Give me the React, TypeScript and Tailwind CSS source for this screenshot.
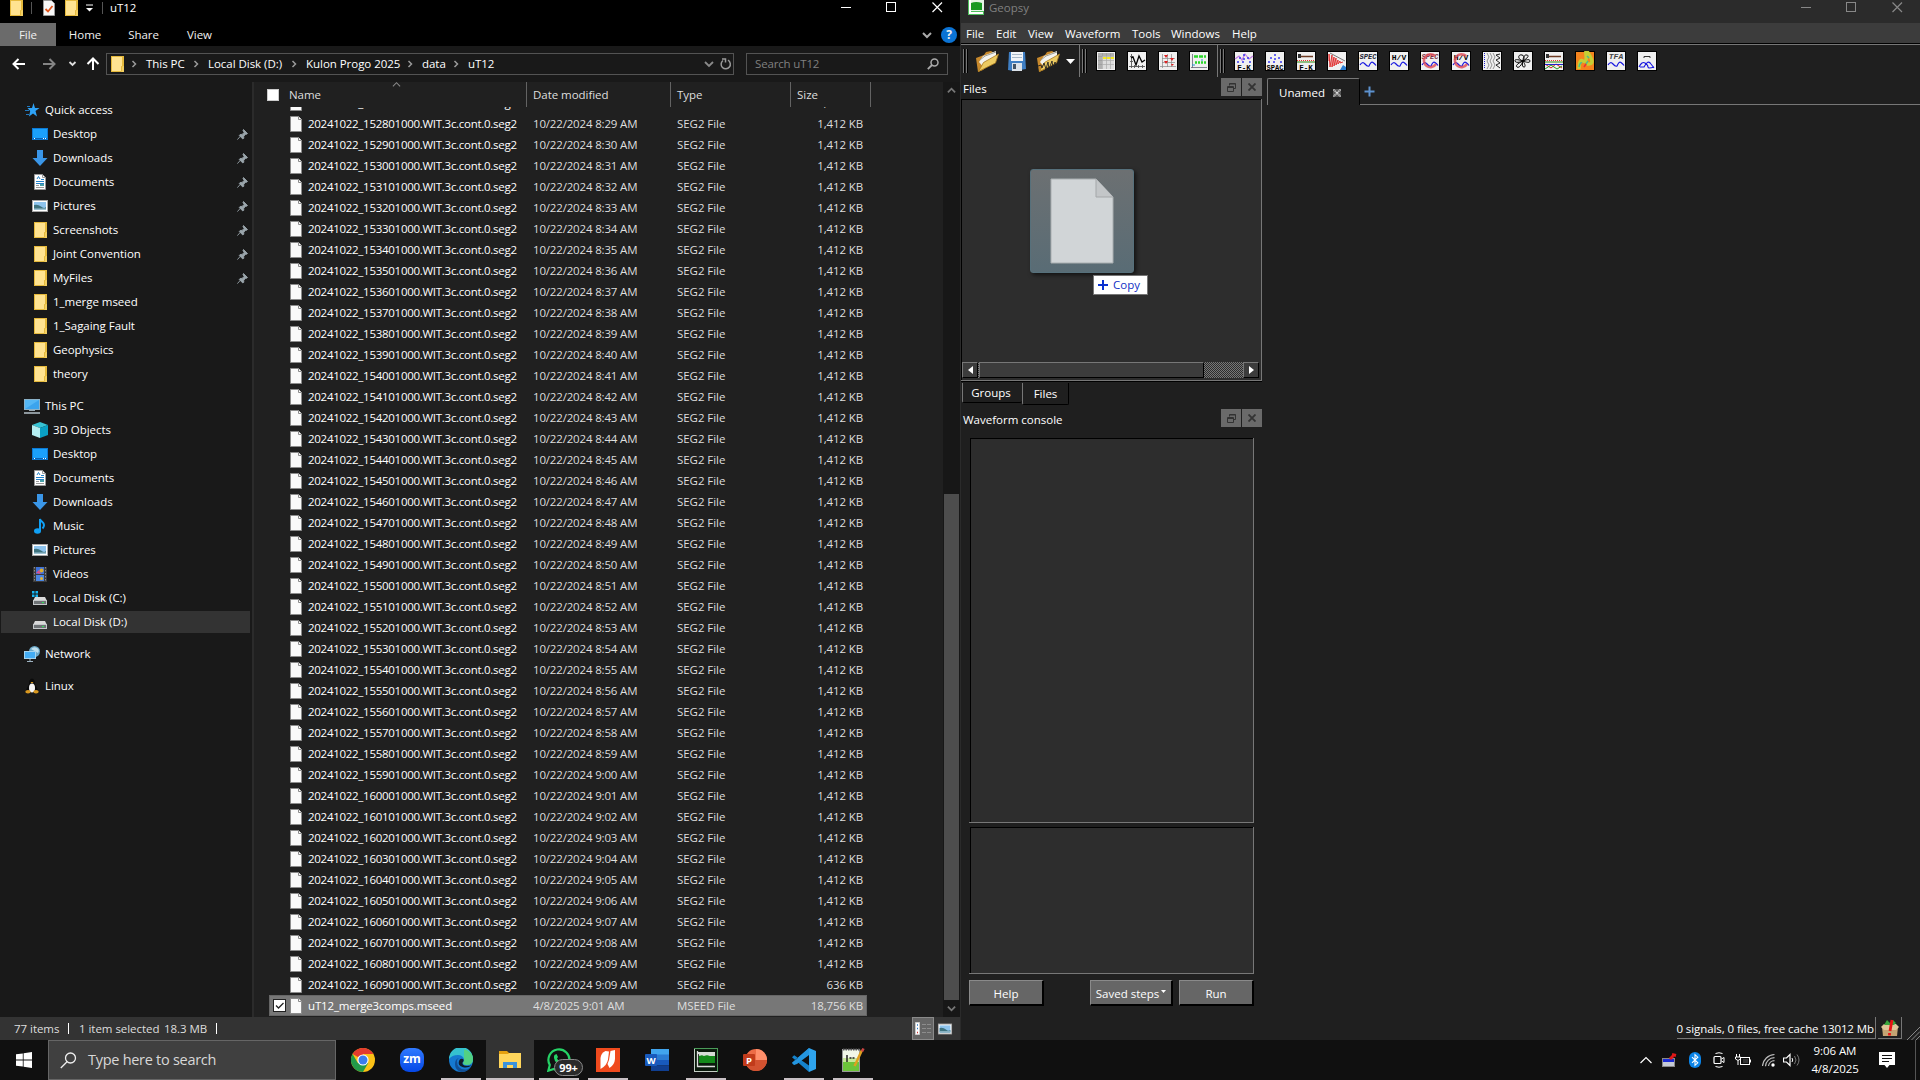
import React from "react";

type P = { children?: React.ReactNode; className?: string };

const Svg = ({ w = 16, h = 16, vb, className = "", children }: P & { w?: number; h?: number; vb?: string }) => (
  <svg width={w} height={h} viewBox={vb ?? `0 0 ${w} ${h}`} fill="none" className={`block shrink-0 ${className}`}>
    {children}
  </svg>
);

const Folder = () => (
  <Svg>
    <rect x="2" y="0" width="13" height="16" fill="#e5b93c" />
    <rect x="3" y="1" width="10" height="14" fill="#ffe391" />
    <rect x="12" y="10" width="3" height="6" fill="#f3cf62" />
    <path d="M12.500 15.500v-5h1" stroke="#e5b93c" />
  </Svg>
);

const FileIcon = () => (
  <Svg w={12} h={16}>
    <path d="M.5.5h8l3 3v12H.5z" fill="#fafafa" stroke="#8c8c8c" />
    <path d="M8.500.5v3h3" stroke="#8c8c8c" fill="#fff" />
  </Svg>
);

const DocIcon = () => (
  <Svg>
    <path d="M2.500.5h8l3 3v12h-11z" fill="#fff" stroke="#999" />
    <path d="M10.500.5v3h3" stroke="#999" />
    <path d="M5 5l1.500-2.500L8 5M9 5.500h3M4 7.500h8M4 9.500h8" stroke="#2582c8" />
    <path d="M4 11.500h3M4 13.500h8" stroke="#999" />
    <rect x="8" y="10" width="4" height="2" fill="#4aa1a9" />
  </Svg>
);

const DesktopIcon = () => (
  <Svg>
    <rect x=".5" y="2.500" width="15" height="11" fill="#1ba1fb" stroke="#0d7ad4" />
    <path d="M1 12.500h14" stroke="#0b62b4" />
    <path d="M2 12.500h1M11 12.500h1M13 12.500h1" stroke="#fff" />
  </Svg>
);

const DownIcon = () => (
  <Svg>
    <path d="M5 0h6v8h4.500L8 16 .5 8H5z" fill="#3a96e8" />
  </Svg>
);

const PicIcon = () => (
  <Svg>
    <rect x=".5" y="2.500" width="15" height="11" fill="#fff" stroke="#a8a8a8" />
    <rect x="2" y="4" width="12" height="8" fill="#8ec4ee" />
    <path d="M2 7q4-1 7 1.500t5 .5v3H2z" fill="#3f7480" />
    <path d="M2 10.500h12v1.500H2z" fill="#9fc4d4" />
  </Svg>
);

const StarIcon = () => (
  <Svg>
    <path d="M9.500 1l1.500 5h4.500l-4 3 1.500 5.500L9 11.500 5 14.500 6.200 9 3.500 6H8z" fill="#2ea3f7" />
    <path d="M3 4.500h3M1 8.500h4M2 12.500h3" stroke="#2179be" />
  </Svg>
);

const PcIcon = () => (
  <Svg>
    <rect x=".5" y="1.500" width="15" height="10" fill="#55b7f5" stroke="#8bb2c9" />
    <path d="M1 11L15 2v9z" fill="#3ba4ee" />
    <rect x="5" y="12" width="6" height="1" fill="#9aa9b3" />
    <path d="M0 15h16" stroke="#b5c2ca" strokeWidth="1.500" />
  </Svg>
);

const CubeIcon = () => (
  <Svg>
    <path d="M8 0l8 3-8 3-8-3z" fill="#37c3d4" />
    <path d="M0 3l8 3v10l-8-3z" fill="#b5eef1" />
    <path d="M16 3L8 6v10l8-3z" fill="#0aa0c4" />
  </Svg>
);

const MusicIcon = () => (
  <Svg>
    <ellipse cx="5.500" cy="13" rx="3.500" ry="2.800" fill="#10a0f5" />
    <path d="M8 13V1c1 3 4 3 4 6 0 1.500-.5 2.500-1.500 3.500" stroke="#10a0f5" strokeWidth="2" />
  </Svg>
);

const VideoIcon = () => (
  <Svg>
    <rect x="1" y="1" width="14" height="15" fill="#3b3b3b" />
    <path d="M2.500 1v15M13.500 1v15" stroke="#8a8a8a" strokeDasharray="1.500 1.500" />
    <rect x="4" y="1" width="8" height="7" fill="#3e72d8" />
    <rect x="4" y="9" width="8" height="6" fill="#4a86e2" />
    <circle cx="9.500" cy="4.500" r="2" fill="#dcae2d" />
    <path d="M4 7l3-3 2 4z" fill="#d84f8e" />
    <circle cx="9.500" cy="12.500" r="1.500" fill="#e6b432" />
  </Svg>
);

const DriveIcon = ({ win = false }: { win?: boolean }) => (
  <Svg>
    <path d="M3 7h10l2 4H1z" fill="#d9d9d9" />
    <rect x="1.500" y="10.500" width="13" height="4" fill="#6f7376" stroke="#c5c8ca" />
    <rect x="10" y="12" width="2" height="1" fill="#34e05a" />
    {win && <path d="M0 1h2.500v2.500H0zM3.500 1H6v2.500H3.500zM0 4.500h2.500V7H0zM3.500 4.500H6V7H3.500z" fill="#18b4f0" />}
  </Svg>
);

const NetIcon = () => (
  <Svg>
    <circle cx="10.500" cy="5.500" r="5.500" fill="#6ba8c8" />
    <path d="M7 3q3-3 6-1t1 5" fill="#bfe0ee" />
    <rect x=".5" y="5.500" width="11" height="7" fill="#44adf4" stroke="#a5d4ee" />
    <path d="M3 15.500h6M6 13v2" stroke="#9fb4c2" />
  </Svg>
);

const TuxIcon = () => (
  <Svg>
    <path d="M5.500 2.500Q8-1.500 10.500 2.500L11 6l3 6-2 3H4l-2-3 3-6z" fill="#0a0a0a" />
    <ellipse cx="8" cy="10" rx="3" ry="4.500" fill="#f6f6f6" />
    <path d="M6.500 4h3L8 5.500z" fill="#eaa722" />
    <ellipse cx="4" cy="13.800" rx="2.700" ry="1.700" fill="#d9981f" />
    <ellipse cx="12" cy="13.800" rx="2.700" ry="1.700" fill="#d9981f" />
  </Svg>
);

const Pin = () => (
  <Svg w={11} h={11}>
    <path d="M6.500.5l4 4-1 .8-.8-.1-2 2 .1 2-1 .8L2.300 6.500l.8-1 2-.1 2-2L6 1.500zM3.800 6.800L.4 10.600" fill="#9aa5ab" stroke="#9aa5ab" strokeWidth=".9" />
  </Svg>
);

const Chev = ({ d = "right", c = "#9a9a9a", s = 10, sw = 1.5 }: { d?: "right" | "down" | "up"; c?: string; s?: number; sw?: number }) => (
  <Svg w={s} h={s} vb="0 0 10 10">
    <path d={d === "right" ? "M3.500 2l3 3-3 3" : d === "down" ? "M1 3l4 4 4-4" : "M1 7l4-4 4 4"} stroke={c} strokeWidth={sw} />
  </Svg>
);

const WinButtons = ({ c }: { c: string }) => (
  <div className="ml-auto flex h-[15px] gap-[35px] pr-[17px]">
    <Svg w={10} h={15}><path d="M0 7.500h10" stroke={c} /></Svg>
    <Svg w={11} h={15}><rect x=".5" y="2.500" width="9" height="9" stroke={c} /></Svg>
    <Svg w={11} h={15}><path d="M.5 2.500l9.500 9.500M10 2.500L.5 12" stroke={c} strokeWidth="1.200" /></Svg>
  </div>
);

const crumbs: [string, string][] = [
  ["This PC", "w-[38px]"],
  ["Local Disk (D:)", "w-[74px]"],
  ["Kulon Progo 2025", "w-[92px]"],
  ["data", "w-[22px]"],
  ["uT12", "w-[30px]"],
];

const quick: [string, React.ReactNode, boolean][] = [
  ["Desktop", <DesktopIcon />, true],
  ["Downloads", <DownIcon />, true],
  ["Documents", <DocIcon />, true],
  ["Pictures", <PicIcon />, true],
  ["Screenshots", <Folder />, true],
  ["Joint Convention", <Folder />, true],
  ["MyFiles", <Folder />, true],
  ["1_merge mseed", <Folder />, false],
  ["1_Sagaing Fault", <Folder />, false],
  ["Geophysics", <Folder />, false],
  ["theory", <Folder />, false],
];

const pc: [string, React.ReactNode][] = [
  ["3D Objects", <CubeIcon />],
  ["Desktop", <DesktopIcon />],
  ["Documents", <DocIcon />],
  ["Downloads", <DownIcon />],
  ["Music", <MusicIcon />],
  ["Pictures", <PicIcon />],
  ["Videos", <VideoIcon />],
  ["Local Disk (C:)", <DriveIcon win />],
  ["Local Disk (D:)", <DriveIcon />],
];

const Root = ({ label, icon, className = "" }: { label: string; icon: React.ReactNode; className?: string }) => (
  <div className={`flex h-6 items-center gap-[5px] pl-6 ${className}`}>
    {icon}
    <span>{label}</span>
  </div>
);

const Item = ({ label, icon, pin, on }: { label: string; icon: React.ReactNode; pin?: boolean; on?: boolean }) => (
  <div className="flex h-6 items-start pl-px">
    <div className={`flex h-[22px] w-[249px] translate-y-px items-center gap-[5px] pl-[31px] pr-[2px] ${on ? "bg-[#333]" : ""}`}>
      {icon}
      <span className="flex-1">{label}</span>
      {pin && <Pin />}
    </div>
  </div>
);

const p2 = (n: number) => String(n).padStart(2, "0");
const rows = Array.from({ length: 43 }, (_, i) => {
  const t = 15 * 60 + 27 + i;
  const m = Math.min(t + 1, 16 * 60 + 9);
  return {
    name: `20241022_${p2(Math.floor(t / 60))}${p2(t % 60)}01000.WIT.3c.cont.0.seg2`,
    date: `10/22/2024 ${Math.floor(m / 60) - 7}:${p2(m % 60)} AM`,
    size: i === 42 ? "636 KB" : "1,412 KB",
  };
});

const Row = ({ name, date, type, size, on }: { name: string; date: string; type: string; size: string; on?: boolean }) => (
  <div
    className={`ml-[15px] grid h-[21px] w-[598px] shrink-0 grid-cols-[21px_18px_225px_144px_96px_1fr] items-center whitespace-nowrap pr-1 text-[#dedede] ${
      on ? "bg-[#777] outline -outline-offset-1 outline-[#666]" : ""
    }`}
  >
    <div className="pl-1">
      {on && (
        <Svg w={13} h={13}>
          <rect x=".5" y=".5" width="12" height="12" fill="#fff" stroke="#222" />
          <path d="M3 6.500L5.500 9 10.500 4" stroke="#222" strokeWidth="1.300" />
        </Svg>
      )}
    </div>
    <FileIcon />
    <span className={`text-white ${on ? "tracking-[-0.15px]" : "tracking-[-0.28px]"}`}>{name}</span>
    <span className="tracking-[-0.17px]">{date}</span>
    <span className="tracking-[-0.06px]">{type}</span>
    <span className="text-right tracking-[-0.12px]">{size}</span>
  </div>
);

const Explorer = () => (
  <section className="flex h-full w-[960px] flex-col bg-[#191919] tracking-[-0.04px] text-white">
    <div className="flex h-[23px] bg-black">
      <div className="flex h-4 items-center pl-2">
        <Folder />
        <div className="ml-[7px] h-3 w-px bg-[#555]" />
        <Svg className="ml-[8px]">
          <path d="M3.500.5h8l3 3v12h-11z" fill="#f7f7f7" stroke="#999" />
          <path d="M5.500 9l2.500 2.500L12.500 6" stroke="#e2551c" strokeWidth="1.800" />
        </Svg>
        <div className="ml-[7px]"><Folder /></div>
        <Svg w={7} h={8} className="ml-[7px]">
          <path d="M0 1h7" stroke="#fff" />
          <path d="M0 4h7L3.500 7.500z" fill="#fff" />
        </Svg>
        <div className="ml-[9px] h-3 w-px bg-[#555]" />
        <span className="ml-[7px]">uT12</span>
      </div>
      <WinButtons c="#fff" />
    </div>
    <div className="flex h-[23px] items-center bg-black text-[#f0f0f0]">
      <div className="flex h-full w-14 items-center justify-center bg-[#6b6b6b] pt-px">File</div>
      <span className="w-[58px] pt-px text-center">Home</span>
      <span className="w-[59px] pt-px text-center">Share</span>
      <span className="w-[53px] pt-px text-center">View</span>
      <div className="ml-auto flex items-center gap-[9px] pr-[3px]">
        <Chev d="down" c="#aaa" sw={2} />
        <div className="flex h-4 w-4 items-center justify-center rounded-full bg-[#0b73d4] text-[12px] font-bold">?</div>
      </div>
    </div>
    <div className="flex h-9 items-center">
      <Svg w={106} h={24}>
        <path d="M25 12H13.500M18.500 7l-5 5 5 5" stroke="#fff" strokeWidth="2" />
        <path d="M43 12h11.500M49.500 7l5 5-5 5" stroke="#858585" strokeWidth="2" />
        <path d="M69.500 10l3 3 3-3" stroke="#ddd" strokeWidth="1.800" />
        <path d="M93 18V7M87.500 12L93 6.500l5.500 5.500" stroke="#fff" strokeWidth="2" />
      </Svg>
      <div className="flex h-[22px] w-[148px] flex-1 items-center border border-[#535353] pl-[2px]">
        <Folder />
        {crumbs.map(([t, w], i) => (
          <div key={t} className={i === 0 ? "-ml-[3px] flex items-center" : "flex items-center"}>
            <div className="flex w-6 justify-center"><Chev /></div>
            <span className={`${w} whitespace-nowrap`}>{t}</span>
          </div>
        ))}
        <div className="ml-auto flex items-center gap-[6px] pr-px">
          <Chev d="down" c="#8a8a8a" sw={1.800} />
          <Svg w={12} h={12}>
            <path d="M3 2.500a4.600 4.600 0 1 0 5 -.3M2 1h3.500v3.500" stroke="#9a9a9a" strokeWidth="1.500" />
          </Svg>
        </div>
      </div>
      <div className="ml-3 mr-3 flex h-[22px] w-[202px] items-center justify-between border border-[#535353] pl-2 pr-[8px] text-[#808080]">
        <span className="tracking-[-0.15px]">Search uT12</span>
        <Svg w={12} h={12}>
          <circle cx="7.500" cy="4.500" r="3.500" stroke="#aaa" strokeWidth="1.500" />
          <path d="M5 7L.8 11.200" stroke="#aaa" strokeWidth="1.800" />
        </Svg>
      </div>
    </div>
    <div className="flex h-[935px]">
      <nav className="w-[252px] pt-4">
        <Root label="Quick access" icon={<StarIcon />} />
        {quick.map(([l, ic, pin]) => <Item key={l} label={l} icon={ic} pin={pin} />)}
        <Root label="This PC" icon={<PcIcon />} className="mt-2" />
        {pc.map(([l, ic], i) => <Item key={l} label={l} icon={ic} on={i === 8} />)}
        <Root label="Network" icon={<NetIcon />} className="mt-2" />
        <Root label="Linux" icon={<TuxIcon />} className="mt-2" />
      </nav>
      <div className="w-[2px] bg-[#2b2b2b]" />
      <div className="flex flex-1 flex-col bg-[#202020]">
        <div className="relative flex h-[25px] shrink-0 text-[#dedede]">
          <div className="flex w-[273px] items-center border-r border-[#636363] pl-[13px]">
            <div className="h-3 w-3 border border-[#ccc] bg-white" />
            <span className="ml-[10px]">Name</span>
          </div>
          <div className="flex w-[144px] items-center border-r border-[#636363] pl-[6px]">Date modified</div>
          <div className="flex w-[120px] items-center border-r border-[#636363] pl-[6px]">Type</div>
          <div className="flex w-[80px] items-center border-r border-[#636363] pl-[6px]">Size</div>
          <div className="absolute left-[138px] top-[-2px]"><Chev d="up" c="#888" s={9} sw={1.200} /></div>
        </div>
        <div className="flex h-[910px] flex-col justify-end overflow-hidden pb-px">
          {rows.map((r) => <Row key={r.name} {...r} type="SEG2 File" />)}
          <Row name="uT12_merge3comps.mseed" date="4/8/2025 9:01 AM" type="MSEED File" size="18,756 KB" on />
        </div>
      </div>
      <div className="flex w-[17px] flex-col items-center bg-[#171717]">
        <div className="flex h-[17px] items-center"><Chev d="up" c="#777" s={9} sw={2} /></div>
        <div className="mt-[395px] w-[15px] flex-1 bg-[#4d4d4d]" />
        <div className="flex h-[17px] items-center"><Chev d="down" c="#777" s={9} sw={2} /></div>
      </div>
    </div>
    <div className="flex h-[23px] items-center bg-[#333] pl-[14px] text-[#dedede]">
      <span className="w-[54px]">77 items</span>
      <div className="h-[11px] w-px bg-white" />
      <span className="ml-[10px] w-[85px] whitespace-nowrap">1 item selected</span>
      <span className="w-[52px] whitespace-nowrap">18.3 MB</span>
      <div className="h-[11px] w-px bg-white" />
      <div className="ml-auto flex h-[23px] w-[22px] items-center justify-center border border-[#8a8a8a] bg-[#666]">
        <Svg w={17} h={14}>
          <path d="M.5.5h4v12h-4z" fill="#fff" stroke="#ccc" />
          <path d="M2 3h1M2 6.500h1" stroke="#2a7ac9" strokeWidth="1.500" />
          <path d="M2 10.500h1" stroke="#c33" strokeWidth="1.500" />
          <path d="M7 2.500h4M12 2.500h4M7 6.500h4M12 6.500h4M7 10.500h4M12 10.500h4" stroke="#8c8c8c" />
        </Svg>
      </div>
      <div className="ml-[3px] mr-[7px] scale-90"><PicIcon /></div>
    </div>
  </section>
);

const Tool = ({ children }: P) => (
  <div className="flex w-[31px] shrink-0 justify-center">
    <Svg w={20} h={20}>
      <rect width="20" height="20" fill="#000" />
      <rect x="1" y="1" width="18" height="18" fill="#f0f0f0" />
      {children}
    </Svg>
  </div>
);

const Txt = ({ y, s = 7.5, it, c = "#000", children }: P & { y: number; s?: number; it?: boolean; c?: string }) => (
  <text x="10" y={y} textAnchor="middle" fontSize={s} fontWeight="bold" fontStyle={it ? "italic" : "normal"} fill={c} fontFamily="Liberation Mono, monospace" letterSpacing="0">
    {children}
  </text>
);

const Wave = ({ y = 14 }: { y?: number }) => (
  <path d={`M2 ${y}q2.500 -4 5 -1t4 2q2 -5 4 -3.500t3 3`} stroke="#1616e0" strokeWidth="1.200" />
);

const Grip = () => (
  <div className="flex h-6 w-[5px] shrink-0 justify-between">
    <div className="w-[2px] border-l border-[#777] bg-black" />
    <div className="w-[2px] border-l border-[#777] bg-black" />
  </div>
);

const OpenFolder = ({ wave }: { wave?: boolean }) => (
  <Svg w={25} h={24}>
    <path d="M1 9l8-3 2-3 5-1 3 2 1 5-12 12-5 2z" fill="#c8892c" />
    <path d="M4 13L8 7l13-5v6L9 19z" fill="#f4f4ef" />
    <path d="M5 11l5-4 11-4" stroke="#9d9d94" />
    <path d="M3.500 22.500l5-9 15-8.500-3 9z" fill="#eccb62" stroke="#a87a20" strokeWidth=".8" />
    {wave && <path d="M2 17l3-1 1 3 2-5 2 6 2-7 1 7 3-8 1 7 2-6 2 4 2-3" stroke="#222" strokeWidth=".9" />}
  </Svg>
);

const hammer = (
  <>
    <path d="M3 5.500h14" stroke="#6d3a22" strokeWidth="1.500" />
    <rect x="2" y="3" width="3" height="4" fill="#333" />
    <path d="M1 9.500h18" stroke="#e33" strokeDasharray="1 1" />
    <path d="M1 11h18" stroke="#4c9a35" strokeWidth="1.200" />
  </>
);

const dots = (
  <path d="M9 4h2M5 7h2M13 7h2M9 8h2M3 11h2M8 11h2M15 11h2" stroke="#3a3af0" strokeWidth="1.700" />
);

const DockTitle = ({ children, className = "" }: P) => (
  <div className={`flex items-start ${className}`}>
    <span className="pl-[2px] pt-[3px]">{children}</span>
    <div className="ml-auto flex gap-px">
      <div className="flex h-[18px] w-5 items-center justify-center bg-[#6a6a6a]">
        <Svg w={9} h={9}>
          <path d="M2.500 2.500v-2h6v5h-2M2.500 1h6M.5 3.500h6v5h-6zM.5 4.500h6" stroke="#333" />
        </Svg>
      </div>
      <div className="flex h-[18px] w-5 items-center justify-center bg-[#6a6a6a]">
        <Svg w={8} h={8}><path d="M.5.5l7 7M7.500.5l-7 7" stroke="#333" strokeWidth="1.800" /></Svg>
      </div>
    </div>
  </div>
);

const Btn = ({ children, className = "" }: P) => (
  <div className={`flex h-[26px] items-center justify-center gap-[2px] whitespace-nowrap border-b-2 border-l border-r-2 border-t border-b-black border-l-[#8a8a8a] border-r-black border-t-[#8a8a8a] bg-[#666] pt-[2px] ${className}`}>
    {children}
  </div>
);

const ScrollBtn = ({ left }: { left?: boolean }) => (
  <div className="flex h-4 w-4 items-center justify-center border border-b-black border-l-[#777] border-r-black border-t-[#777] bg-[#3c3c3c]">
    <Svg w={5} h={8}><path d={left ? "M5 0v8L0 4z" : "M0 0v8l5-4z"} fill="#fff" /></Svg>
  </div>
);

const Sunken = ({ className = "" }: P) => (
  <div className={`border-b border-r border-[#777] pl-px ${className}`}>
    <div className="h-full border-l border-t border-black bg-[#2d2d2d]" />
  </div>
);

const DragGhost = () => (
  <div className="absolute left-[69px] top-[70px] h-[126px] w-[118px]">
    <div className="flex h-[104px] w-[104px] items-center justify-center rounded-[3px] border border-[#56707b] bg-linear-to-b from-[#6c7072] to-[#596c75] shadow-[2px_2px_4px_rgba(0,0,0,0.6)]">
      <Svg w={64} h={86}>
        <path d="M1 1h45l17 18v66H1z" fill="#d1d5d7" stroke="#a9aeb0" />
        <path d="M46 1v18h17" fill="#c3c6c8" stroke="#a4a7a9" />
      </Svg>
    </div>
    <div className="absolute left-[63px] top-[106px] flex h-5 w-[55px] items-center gap-[5px] border border-[#767676] bg-white pl-1 text-[#1131c5]">
      <Svg w={10} h={10}><path d="M5 0v10M0 5h10" stroke="#0a32d0" strokeWidth="2" /></Svg>
      <span>Copy</span>
    </div>
  </div>
);

const Geopsy = () => (
  <section className="flex h-full w-[960px] flex-col border-l border-[#2b2b2b] bg-[#1f1f1f] text-white">
    <div className="flex h-[23px] bg-[#2b2b2b]">
      <div className="flex h-[15px] items-start gap-[5px] pl-[7px]">
        <Svg w={16} h={15}>
          <rect width="16" height="15" fill="#e8f5e8" />
          <path d="M0 0h3v11h13v4H0z" fill="#4fbf5c" />
          <path d="M1 0h2v12h12v2H1z" fill="#fff" />
          <rect x="3" y="1" width="11" height="9" fill="#189a22" />
          <path d="M3 3q5-2 11 0V0H3z" fill="#e4f6e5" />
        </Svg>
        <span className="text-[#808080]">Geopsy</span>
      </div>
      <WinButtons c="#888" />
    </div>
    <div className="flex h-5 items-center bg-[#3c3c3c] pl-[5px] pt-[2px]">
      <span className="w-[30px]">File</span>
      <span className="w-8">Edit</span>
      <span className="w-[37px]">View</span>
      <span className="w-[67px]">Waveform</span>
      <span className="w-[39px]">Tools</span>
      <span className="w-[61px]">Windows</span>
      <span>Help</span>
    </div>
    <div className="flex h-[34px] border-t border-black">
      <div className="flex w-[118px] items-center border-t border-[#777] pl-[2px]">
        <Grip />
        <div className="ml-[7px]"><OpenFolder /></div>
        <Svg w={20} h={20} className="ml-[7px]">
          <path d="M2 1h16l1 17-12 2-6-1z" fill="#3f7fc4" />
          <path d="M4 1h12v9H4z" fill="#f1f5f9" />
          <path d="M5 3.500h10M5 6.500h10" stroke="#a8b8c8" />
          <path d="M5 12h10v8H5z" fill="#dce3ea" />
          <rect x="6" y="13" width="3" height="5" fill="#456" />
        </Svg>
        <div className="ml-[9px]"><OpenFolder wave /></div>
        <Svg w={9} h={5} className="ml-[5px]"><path d="M0 0h9L4.500 5z" fill="#fff" /></Svg>
      </div>
      <div className="flex w-[138px] items-center border-l border-t border-[#777] pl-[2px]">
        <Grip />
        <div className="ml-[3px] flex">
          <Tool>
            <rect x="2" y="2" width="16" height="16" fill="#ddd" />
            <rect x="7" y="6" width="11" height="2" fill="#f4ea22" />
            <path d="M2 5.500h16M2 9.500h16M2 13.500h16M6.500 2v16M10.500 2v16M14.500 2v16" stroke="#aaa" strokeWidth=".7" />
            <path d="M2 2h4v16H2zM2 2h16v3H2z" fill="#8888" />
          </Tool>
          <Tool>
            <path d="M4.500 3v14M2 15.500h16M7.500 14v3M11.500 14v3M15.500 14v3M3 5.500h3M3 10.500h3" stroke="#555" strokeWidth=".9" />
            <path d="M4 7l2-1 3 8 3-9 3 6 3-2" stroke="#000" strokeWidth="1.300" />
          </Tool>
          <Tool>
            <path d="M4.500 3v14M2 15.500h16M9.500 3v13M13.500 3v13M4 7.500h13M4 11.500h13" stroke="#888" strokeWidth=".7" />
            <path d="M6 4h4l-2 3zM12 7h4l-2 3zM6 10h4l-2 3zM13 13h3l-2 2z" fill="#d22" />
          </Tool>
          <Tool>
            <path d="M3.500 3v14M2 16.500h16" stroke="#667" strokeWidth=".8" />
            <path d="M5 5.500h12" stroke="#2bd62b" strokeWidth="2.500" strokeDasharray="4 1" />
            <path d="M6 11.500h11" stroke="#2bd62b" strokeWidth="2.500" strokeDasharray="2 1" />
            <path d="M3 14h3M12 9h2" stroke="#29c" />
          </Tool>
        </div>
      </div>
      <div className="flex flex-1 items-center border-l border-t border-[#777] pl-[2px]">
        <Grip />
        <div className="ml-[3px] flex">
          <Tool>
            <path d="M1 8l4-3 3 4 3-6 4 5 4-3" stroke="#c07ae0" strokeWidth="1.200" />
            {dots}
            <Txt y={18.800}>F-K</Txt>
          </Tool>
          <Tool>{dots}<Txt y={18.500} s={7}>SPAC</Txt></Tool>
          <Tool>{hammer}<Txt y={18.800}>F-K</Txt></Tool>
          <Tool>
            <path d="M2 10V3l1 13L5 4v12l2-10v9l2-8v7l2-5v4l2-3v2l3-1" stroke="#e02424" strokeWidth=".9" />
            <path d="M3 2l15 8" stroke="#444" strokeWidth=".7" />
            <path d="M13 19l3-5 3 2v3z" fill="#2d7fd2" />
          </Tool>
          <Tool><Txt y={8} s={7} it c="#223">SPEC</Txt><Wave /></Tool>
          <Tool><Txt y={8.500} s={8}>H/V</Txt><Wave /></Tool>
          <Tool><Txt y={8} s={7} it c="#734">SPEC</Txt><Wave /><path d="M15 5a6.500 6.500 0 1 0 1 8" stroke="#e04a55" strokeWidth="2.500" opacity=".8" /></Tool>
          <Tool><Txt y={8.500} s={8}>H/V</Txt><Wave /><path d="M15 5a6.500 6.500 0 1 0 1 8" stroke="#e04a55" strokeWidth="2.500" opacity=".8" /></Tool>
          <Tool>
            <path d="M2.500 2v16" stroke="#22c" strokeDasharray="1 1" />
            <path d="M5 2l2 4-2 4 2 4-2 4M8 2l2 4-2 4 2 4-2 4M11 2l2 4-2 4 2 4-2 4" stroke="#888" strokeWidth=".9" />
            <path d="M18 3l-4 1 4 3-4 2 4 3-4 2 4 3" stroke="#222" />
          </Tool>
          <Tool>
            <path d="M10 10C4 8 5 3 9 4s1 6 1 6 0-7 4-6-4 6-4 6 7-3 7 0-7 0-7 0 4 6 1 6-1-6-1-6-3 8-6 6 6-6 6-6-7 3-8 0 8 0 8 0" stroke="#000" />
          </Tool>
          <Tool>{hammer}<path d="M1 13l6 4 5-4 6 4" stroke="#d22" /><path d="M1 18l6-4 6 4 5-3" stroke="#292" /><path d="M1 13.500h18" stroke="#22c" /></Tool>
          <Tool>
            <rect x="1" y="1" width="18" height="18" fill="#f5841e" />
            <path d="M4 18q0-10 4-8t3-6 4 1-3 8" stroke="#c5cf35" strokeWidth="3.500" />
            <path d="M4 16q1-5 3-4M12 5l2 2M11 13l2-3" stroke="#4fbf8a" strokeWidth="1.500" />
            <path d="M9 16l2-3" stroke="#e33" strokeWidth="1.500" />
          </Tool>
          <Tool><Txt y={8} s={8} it c="#444">TFA</Txt><Wave /></Tool>
          <Tool><path d="M7 7V5.500h6V7" stroke="#333" /><path d="M2 16q3-6 6-4t3 4 6 0M3 16h4q4-8 7-3l3 4" stroke="#1616e0" strokeWidth="1.100" /></Tool>
        </div>
      </div>
    </div>
    <div className="flex h-[940px]">
      <div className="w-[301px]">
        <DockTitle className="h-[22px] pt-px">Files</DockTitle>
        <div className="relative flex h-[282px] flex-col justify-end border-b border-r border-[#777] bg-[#2d2d2d] shadow-[inset_1px_1px_0_#000]">
          <DragGhost />
          <div className="mb-[2px] ml-px mr-[2px] flex h-4 bg-[repeating-conic-gradient(#777_0_25%,#2d2d2d_0_50%)] bg-[length:2px_2px]">
            <ScrollBtn left />
            <div className="ml-px h-4 w-[225px] border border-b-black border-l-[#777] border-r-black border-t-[#777] bg-[#3c3c3c]" />
            <div className="ml-auto"><ScrollBtn /></div>
          </div>
        </div>
        <div className="flex h-6 items-start border-t border-black pt-px">
          <div className="ml-px flex h-5 w-[60px] items-center justify-center rounded-b-[2px] border-b border-l border-b-black border-l-[#777] pr-[3px]">Groups</div>
          <div className="flex h-[22px] w-[47px] items-center justify-center rounded-b-[2px] border-b border-l border-r border-b-black border-l-[#777] border-r-black">Files</div>
        </div>
        <DockTitle className="mt-[4px] h-[29px]">Waveform console</DockTitle>
        <div className="pl-2 pr-[8px]">
          <Sunken className="h-[385px]" />
          <Sunken className="mt-1 h-[147px]" />
          <div className="mt-[6px] flex pr-0">
            <Btn className="w-[75px]">Help</Btn>
            <Btn className="ml-auto w-[83px]">
              Saved steps
              <Svg w={5} h={3} className="-mt-1"><path d="M0 0h5L2.500 3z" fill="#fff" /></Svg>
            </Btn>
            <Btn className="ml-[6px] w-[75px]">Run</Btn>
          </div>
        </div>
      </div>
      <div className="flex flex-1 pl-[5px] pt-px">
        <div className="flex h-[27px] w-[93px] items-center rounded-t-[2px] border-l border-r border-t border-l-[#777] border-r-black border-t-[#777] pl-[11px] pt-[2px]">
          <span className="w-[46px]">Unamed</span>
          <Svg w={8} h={8} className="ml-[8px]">
            <rect width="8" height="8" fill="#555" />
            <path d="M.5.5l7 7M7.500.5l-7 7" stroke="#ddd" strokeDasharray="1.200 .6" strokeWidth="1.500" />
          </Svg>
        </div>
        <div className="flex h-[27px] flex-1 items-center border-b border-[#777] pl-1 pt-px">
          <Svg w={11} h={11}><path d="M5.500.5v10M.5 5.500h10" stroke="#5d92cf" strokeWidth="2" /></Svg>
        </div>
      </div>
    </div>
    <div className="flex h-[23px] justify-end">
      <div className="flex h-[22px] w-[199px] items-center justify-end border-b border-r border-[#777] whitespace-nowrap pr-px pt-[2px] tracking-[-0.08px]">
        0 signals, 0 files, free cache 13012 Mb
      </div>
      <div className="ml-[2px] flex h-[22px] w-6 items-center justify-center border-b border-r border-[#777]">
        <Svg w={18} h={18}>
          <path d="M1 8h16l-1 9H2z" fill="#c4a473" />
          <path d="M0 8l3-3h12l3 3-3 3H3z" fill="#e0c698" />
          <path d="M3 6l3-5 3 3 3-3 3 3-2 2z" fill="#3aa63c" />
          <path d="M11 1l-2 11M8.500 14v2.500" stroke="#e81414" strokeWidth="2.800" />
        </Svg>
      </div>
      <Svg w={13} h={13} className="ml-[5px] self-end"><path d="M0 13L13 0M4.500 13L13 4.500M9 13l4-4" stroke="#888" /></Svg>
    </div>
  </section>
);

const TaskButton = ({ children, run, on }: P & { run?: boolean; on?: boolean }) => (
  <div className={`flex h-10 w-12 shrink-0 flex-col items-center ${on ? "bg-[#333]" : ""}`}>
    <div className="flex h-[38px] items-center pt-[2px]">{children}</div>
    {run && <div className={`h-[2px] bg-[#c8c0c4] ${on ? "w-12" : "w-10"}`} />}
  </div>
);

const Taskbar = () => (
  <footer className="flex h-10 bg-[#101010] text-white">
    <div className="flex w-12 items-center justify-center">
      <Svg><path d="M0 2.300l6.800-.9v6.200H0zM7.600 1.200L16 0v7.600H7.600zM0 8.400h6.800v6.200L0 13.700zM7.600 8.400H16V16l-8.400-1.200z" fill="#fff" /></Svg>
    </div>
    <div className="flex w-[288px] items-center gap-[11px] border border-[#666] bg-[#404040] pl-[11px]">
      <Svg w={17} h={17}>
        <circle cx="10.500" cy="6" r="5" stroke="#eee" strokeWidth="1.300" />
        <path d="M7 9.700L.8 16" stroke="#eee" strokeWidth="1.300" />
      </Svg>
      <span className="text-[14.500px] tracking-[-0.28px] text-[#d8d8d8]">Type here to search</span>
    </div>
    <div className="ml-[3px] flex gap-px">
      <TaskButton>
        <Svg w={24} h={24}>
          <circle cx="12" cy="12" r="12" fill="#fbc116" />
          <path d="M12 12L1.600 6A12 12 0 0 1 22.400 6H12z" fill="#e33b2e" />
          <path d="M1.600 6A12 12 0 0 0 12 24l5.200-9L12 12 6.800 15z" fill="#229a49" />
          <circle cx="12" cy="12" r="5.600" fill="#fff" />
          <circle cx="12" cy="12" r="4.500" fill="#3b7ded" />
        </Svg>
      </TaskButton>
      <TaskButton>
        <div className="flex h-6 w-6 items-center justify-center rounded-[9px] bg-linear-to-b from-[#3079ff] to-[#0547e6] pb-[3px] text-[12px] font-bold leading-none">zm</div>
      </TaskButton>
      <TaskButton run>
        <Svg w={24} h={24}>
          <circle cx="12" cy="12" r="12" fill="#1579d0" />
          <path d="M0 11A12 12 0 0 1 24 11q0 6-6.500 6-3.500 0-3.500-2.500 1.500-1 1-3.500Q13.500 7 9 7 3 7 0 11z" fill="#35c1cf" />
          <path d="M15 1Q24 4 24 11q0 6-6.500 6-3.500 0-3.500-2.500 1.500-1 1-3.500z" fill="#5cd66a" opacity=".75" />
          <path d="M8 13q0 9 9 8.500 3-.5 5-3Q19 24 12 24 6 22 6 16q0-5 4-6-2 1-2 3z" fill="#114f95" />
          <path d="M13.500 14.500q-1 4.500 9 3-4 3-9 1.500t-3.500-6q1-3 4-2 1.500 1.500-.5 3.500z" fill="#101b2a" />
        </Svg>
      </TaskButton>
      <TaskButton run on>
        <Svg w={22} h={20}>
          <path d="M0 1h8l2 2h11v5H0z" fill="#e5a110" />
          <path d="M0 4h9l1-1h12v15H0z" fill="#ffd65c" />
          <path d="M4 18v-6h14v6h-4v-3H8v3z" fill="#3a92dc" />
        </Svg>
      </TaskButton>
      <TaskButton run>
        <div className="relative">
          <Svg w={24} h={24}>
            <path d="M1.300 22.700l1.500-5.700a10.500 10.500 0 1 1 4 4z" stroke="#25d366" strokeWidth="2.200" />
            <path d="M7.500 7l2-1 1.500 3-1 1.500q1.500 3 4 4l1.500-1 3 1.500q-.5 3-4 2.500Q8 15.500 7 10q-.2-2 .5-3z" fill="#25d366" />
          </Svg>
          <div className="absolute left-[7px] top-[11px] flex h-[17px] w-[29px] items-center justify-center rounded-full border border-[#8a8a8a] bg-[#2a2a2a] text-[11px] font-bold leading-none tracking-[-0.1px]">99+</div>
        </div>
      </TaskButton>
      <TaskButton run>
        <Svg w={24} h={24}>
          <rect width="24" height="24" fill="#f04a1d" />
          <path d="M4.500 21V10q.5-5 5-7l3.500.5-1 8q-1 6-7.500 9.500z" fill="#fff" />
          <path d="M13 12l1.500-9 4.500-1v9q-.5 6-5.500 9l-2-4z" fill="#fff" />
        </Svg>
      </TaskButton>
      <TaskButton>
        <Svg w={24} h={22}>
          <rect x="6" width="18" height="6" fill="#41a5ee" />
          <rect x="6" y="5.500" width="18" height="5.500" fill="#2b7cd3" />
          <rect x="6" y="11" width="18" height="5.500" fill="#185abd" />
          <rect x="6" y="16.500" width="18" height="5.500" fill="#103f91" />
          <rect y="5" width="12" height="12" rx="1" fill="#185abd" />
          <text x="6" y="14.500" textAnchor="middle" fontSize="9.500" fontWeight="bold" fill="#fff" letterSpacing="0">W</text>
        </Svg>
      </TaskButton>
      <TaskButton run>
        <Svg w={24} h={24}>
          <rect x=".5" y=".5" width="23" height="23" fill="#0a1a0c" stroke="#c5cfc5" />
          <path d="M0 .5h24M23.500 0v24" stroke="#4a9a58" />
          <rect x="5" y="5" width="16" height="10" fill="#138a1a" />
          <path d="M4 5h17M5 7l3-1 2 1 3-1 3 1h5" stroke="#d6dcd6" strokeWidth="2" />
          <path d="M3.500 3v15.500H21" stroke="#ddd" strokeWidth="1.300" />
        </Svg>
      </TaskButton>
      <TaskButton>
        <Svg w={24} h={24}>
          <circle cx="13" cy="12" r="11" fill="#ed6c47" />
          <path d="M13 1a11 11 0 0 1 11 11H13z" fill="#ff8f6b" />
          <path d="M2 12h22a11 11 0 0 1-22 0z" fill="#d35230" />
          <rect y="6" width="12" height="12" rx="1" fill="#c13b1b" />
          <text x="6" y="15.500" textAnchor="middle" fontSize="9.500" fontWeight="bold" fill="#fff" letterSpacing="0">P</text>
        </Svg>
      </TaskButton>
      <TaskButton run>
        <Svg w={24} h={24}>
          <path d="M17 0l7 3v18l-7 3z" fill="#2ea4ee" />
          <path d="M17 0L0 14.800l2.200 2L17 6.500zM17 24L0 9.200l2.200-2L17 17.500z" fill="#1583cc" />
          <path d="M17 0v7L5 16l-3 1-2-2z" fill="#2496e0" />
        </Svg>
      </TaskButton>
      <TaskButton run>
        <Svg w={24} h={24}>
          <rect x="1.500" y="1.500" width="17" height="22" fill="#f2f7e8" stroke="#999" />
          <path d="M2 13h16v10H2z" fill="#6cc43a" />
          <path d="M2 10h16v4H2z" fill="#c8e89a" />
          <path d="M2 1.500h17" stroke="#555" strokeWidth="2" strokeDasharray="1.500 1" />
          <path d="M6 7v7M8.500 10h2M11.500 10h2" stroke="#222" strokeWidth="1.500" />
          <path d="M21 2l-6 13-1.500 3" stroke="#e0a020" strokeWidth="2.500" />
          <path d="M22.500.5L21 3.500" stroke="#c44" strokeWidth="2.500" />
        </Svg>
      </TaskButton>
    </div>
    <div className="ml-auto flex items-center">
      <Svg w={12} h={10}><path d="M.5 8L6 2.500 11.500 8" stroke="#fff" strokeWidth="1.200" /></Svg>
      <Svg w={15} h={16} className="ml-[10px]">
        <rect x=".5" y="6.500" width="12" height="8" fill="#c5cad6" stroke="#888" />
        <rect x="1" y="7" width="11" height="3" fill="#1a2ad2" />
        <path d="M8 7l3-3M10 2.500l4 1" stroke="#e01818" strokeWidth="3" />
      </Svg>
      <Svg w={12} h={16} className="ml-[12px]">
        <rect width="12" height="16" rx="6" fill="#0a84e8" />
        <path d="M3 5.200L8.800 10.800 6 13.300V2.700l2.800 2.500L3 10.800" stroke="#fff" strokeWidth="1.100" />
      </Svg>
      <Svg w={12} h={16} className="ml-3">
        <path d="M2.500 1.500q3.500-1.500 7 0M2.500 14.500q3.500 1.500 7 0" stroke="#fff" />
        <rect x="1" y="4.500" width="7" height="7" rx="1" stroke="#fff" strokeWidth="1.200" />
        <path d="M8.500 7l2.500-1.500v5L8.500 9" stroke="#fff" />
      </Svg>
      <Svg w={16} h={14} className="ml-[10px]">
        <rect x="5.500" y="4.500" width="9" height="7" stroke="#fff" />
        <path d="M15.500 6.500v3M1.500 1v3M4.500 1v3M.5 4h5v2L3 7.500.5 6zM3 7.500V12" stroke="#fff" />
        <rect x="8" y="6" width="5" height="4" fill="#333" />
      </Svg>
      <Svg w={13} h={14} className="ml-[11px]">
        <path d="M.5 13A12.500 12.500 0 0 1 12.500 1.500M3.500 13.200A9 9 0 0 1 12.500 4.700M6.500 13A6 6 0 0 1 12.500 7.700" stroke="#bbb" strokeWidth="1.200" />
        <circle cx="11" cy="12" r="1.700" fill="#fff" />
      </Svg>
      <Svg w={17} h={14} className="ml-[8px]">
        <path d="M.5 5h3l3.500-3.500v11L3.500 9h-3z" stroke="#fff" strokeWidth="1.200" />
        <path d="M9 5q1.500 2 0 4" stroke="#fff" /><path d="M11.500 3q3 4 0 8M14 1.500q4 5.500 0 11" stroke="#777" />
      </Svg>
      <div className="ml-[10px] flex w-[50px] flex-col items-center whitespace-nowrap leading-[18px] tracking-[-0.08px]">
        <span>9:06 AM</span>
        <span>4/8/2025</span>
      </div>
      <Svg w={16} h={16} className="ml-[19px]">
        <path d="M0 0h16v13h-5.500L8 16l-2.500-3H0z" fill="#fff" />
        <path d="M3 3.500h10M3 6.500h10M3 9.500h7" stroke="#111" />
      </Svg>
      <div className="ml-5 mr-1 h-10 w-px bg-[#555]" />
    </div>
  </footer>
);

export default function App() {
  return (
    <div className="flex h-[1080px] w-[1920px] flex-col overflow-hidden bg-[#101010] text-[11.5px] leading-[16px] [font-family:'Open_Sans','Noto_Sans',sans-serif]">
      <main className="flex h-[1040px]">
        <Explorer />
        <Geopsy />
      </main>
      <Taskbar />
    </div>
  );
}
